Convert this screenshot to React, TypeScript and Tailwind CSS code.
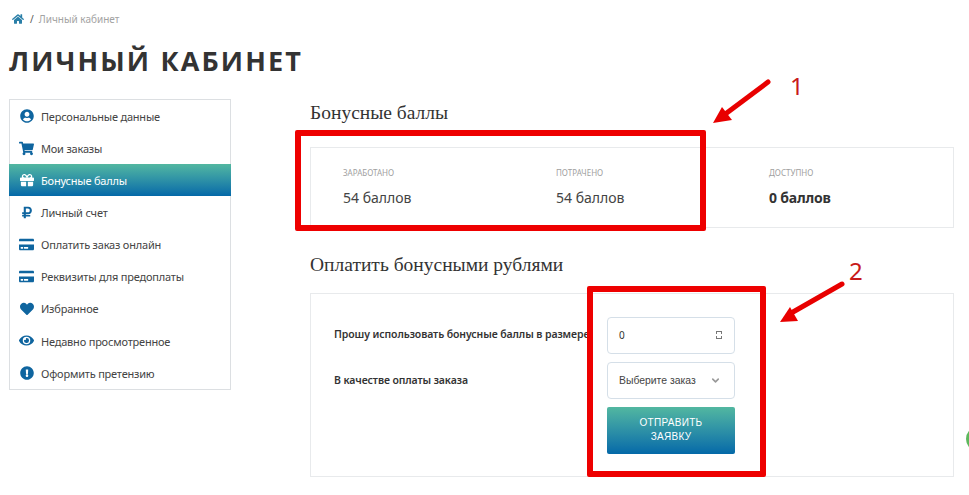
import {
  FaHome,
  FaUserCircle,
  FaShoppingCart,
  FaGift,
  FaRubleSign,
  FaCreditCard,
  FaHeart,
  FaEye,
  FaExclamationCircle,
} from "react-icons/fa";
import { ChevronDown } from "lucide-react";

const menuItems = [
  { label: "Персональные данные", icon: <FaUserCircle className="w-[14px] h-[14px]" /> },
  { label: "Мои заказы", icon: <FaShoppingCart className="w-[15px] h-[15px]" /> },
  { label: "Бонусные баллы", icon: <FaGift className="w-[14px] h-[14px]" />, active: true },
  { label: "Личный счет", icon: <FaRubleSign className="w-[12px] h-[13px]" /> },
  { label: "Оплатить заказ онлайн", icon: <FaCreditCard className="w-[15px] h-[15px]" /> },
  { label: "Реквизиты для предоплаты", icon: <FaCreditCard className="w-[15px] h-[15px]" /> },
  { label: "Избранное", icon: <FaHeart className="w-[14px] h-[14px]" /> },
  { label: "Недавно просмотренное", icon: <FaEye className="w-[15px] h-[15px]" /> },
  { label: "Оформить претензию", icon: <FaExclamationCircle className="w-[14px] h-[14px]" /> },
];

const stats = [
  { label: "ЗАРАБОТАНО", value: "54 баллов", width: "w-[213px]" },
  { label: "ПОТРАЧЕНО", value: "54 баллов", width: "w-[213px]" },
  { label: "ДОСТУПНО", value: "0 баллов", width: "w-[150px]", bold: true },
];

export default function App() {
  return (
    <div className="relative w-[969px] h-[495px] overflow-hidden bg-white font-['Noto_Sans',sans-serif] text-[#333]">
      <div className="flex items-center h-[14px] mt-[12px] ml-[12px] text-[10px] text-[#a3a3a3]">
        <FaHome className="w-[12px] h-[12px] text-[#2a7fa8]" />
        <span className="ml-[6px] text-[#555]">/</span>
        <span className="ml-[5px]">Личный кабинет</span>
      </div>

      <h1 className="mt-[19px] ml-[9px] h-[32px] text-[27px] leading-[32px] font-bold tracking-[2.15px] text-[#333] font-['Open_Sans',sans-serif]">
        ЛИЧНЫЙ КАБИНЕТ
      </h1>

      <div className="flex mt-[22px] ml-[9px]">
        <aside className="flex flex-col w-[222px] h-[291px] border border-[#dcdfe2] bg-white">
          {menuItems.map((item) => (
            <div
              key={item.label}
              className={
                item.active
                  ? "flex flex-1 items-center -mx-px bg-gradient-to-b from-[#52b7a0] to-[#0469a8] text-white"
                  : "flex flex-1 items-center text-[#444]"
              }
            >
              <span
                className={
                  item.active
                    ? "flex justify-center w-[15px] ml-[10px] text-white"
                    : "flex justify-center w-[15px] ml-[9px] text-[#0f659f]"
                }
              >
                {item.icon}
              </span>
              <span className="ml-[7px] pt-[2px] text-[11px] tracking-[-0.2px]">{item.label}</span>
            </div>
          ))}
        </aside>

        <main className="ml-[79px] w-[644px] mt-[2px]">
          <h2 className="h-[24px] text-[19.5px] leading-[24px] text-[#333] font-['Liberation_Serif',serif]">
            Бонусные баллы
          </h2>
          <div className="flex mt-[22px] h-[81px] border border-[#e8eaec] pl-[32px] pt-[19px]">
            {stats.map((stat) => (
              <div key={stat.label} className={stat.width}>
                <div className="text-[8px] leading-[12px] text-[#a0a0a0]">{stat.label}</div>
                <div
                  className={
                    stat.bold
                      ? "mt-[9px] text-[14px] leading-[20px] font-bold tracking-[-0.2px]"
                      : "mt-[9px] text-[14px] leading-[20px] text-[#444]"
                  }
                >
                  {stat.value}
                </div>
              </div>
            ))}
          </div>

          <h2 className="mt-[25px] h-[24px] text-[19.5px] leading-[24px] text-[#333] font-['Liberation_Serif',serif]">
            Оплатить бонусными рублями
          </h2>
          <div className="mt-[16px] h-[184px] border border-[#e8eaec] pt-[23px]">
            <div className="flex items-center h-[36px]">
              <label className="w-[273px] ml-[23px] whitespace-nowrap overflow-hidden text-[10.5px] font-semibold tracking-[-0.1px] text-[#333]">
                Прошу использовать бонусные баллы в размере
              </label>
              <div className="flex items-center justify-between w-[128px] h-[37px] pl-[11px] pr-[12px] border border-[#d5dfe8] rounded-[4px] text-[10px]">
                <span>0</span>
                <span className="flex flex-col items-center w-[6px]">
                  <span className="w-[6px] h-[3px] border-t border-x border-[#777]" />
                  <span className="w-[6px] h-[3px] border-b border-x border-[#777] mt-[2px]" />
                </span>
              </div>
            </div>
            <div className="flex items-center h-[37px] mt-[9px]">
              <label className="w-[273px] ml-[23px] pt-px text-[10.5px] font-semibold tracking-[-0.1px] text-[#333]">
                В качестве оплаты заказа
              </label>
              <div className="flex items-center justify-between w-[128px] h-[37px] pl-[11px] pr-[13px] border border-[#d5dfe8] rounded-[4px] text-[10.4px] text-[#444] font-['Liberation_Sans',sans-serif]">
                <span>Выберите заказ</span>
                <ChevronDown className="w-[11px] h-[11px] text-[#999]" strokeWidth={3.5} />
              </div>
            </div>
            <button className="block ml-[296px] mt-[8px] w-[128px] h-[47px] pb-[2px] rounded-[2px] bg-gradient-to-b from-[#52b7a0] to-[#0469a8] text-white text-[10px] leading-[14px] tracking-[0.3px] font-['Liberation_Sans',sans-serif]">
              ОТПРАВИТЬ
              <br />
              ЗАЯВКУ
            </button>
          </div>
        </main>
      </div>

      {/* annotations drawn on top of the screenshot */}
      <div className="absolute left-[295px] top-[130px] w-[411px] h-[101px] border-[6px] border-[#ee0000] rounded-[2px]" />
      <div className="absolute left-[587px] top-[286px] w-[179px] h-[191px] border-[6px] border-[#ee0000] rounded-[2px]" />
      <svg className="absolute left-0 top-0 w-[969px] h-[495px] pointer-events-none" viewBox="0 0 969 495">
        <path d="M768 82 L724 115" stroke="#e80000" strokeWidth="5" strokeLinecap="round" />
        <path d="M713 123 L722 107 L732 120 Z" fill="#e80000" />
        <path d="M842 284 L793 312" stroke="#e80000" strokeWidth="5" strokeLinecap="round" />
        <path d="M780 322 L790 307 L798 321 Z" fill="#e80000" />
      </svg>
      <span className="absolute left-[790px] top-[72px] text-[24px] leading-[28px] text-[#c81a1a]">1</span>
      <span className="absolute left-[849px] top-[257px] text-[24px] leading-[28px] text-[#c81a1a]">2</span>
      <div className="absolute left-[966px] top-[426px] w-[26px] h-[26px] rounded-full bg-[#5cb85c]" />
    </div>
  );
}
